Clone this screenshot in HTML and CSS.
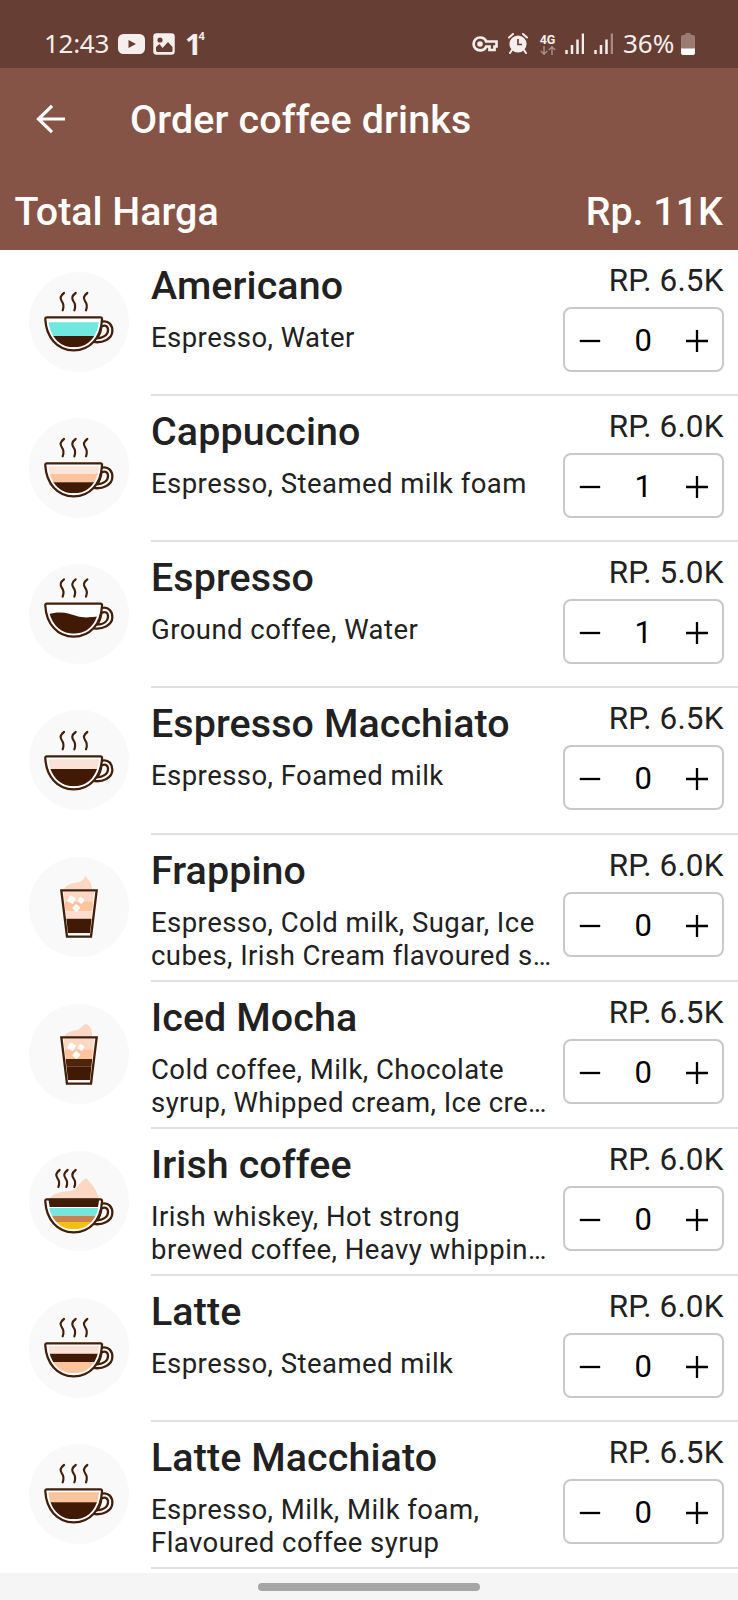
FILE: index.html
```html
<!DOCTYPE html>
<html lang="en">
<head>
<meta charset="utf-8">
<title>Order coffee drinks</title>
<link rel="stylesheet" href="styles.css">
</head>
<body>
<svg class="defs" width="0" height="0">
  <defs>
    <clipPath id="bowl"><path d="M58 143H210C207 190 180 226 134 226C90 226 61 190 58 143Z"/></clipPath>
    <clipPath id="tumbler"><path d="M103 103H196L183 229H117Z"/></clipPath>
    <symbol id="steam" viewBox="0 0 300 300"><g fill="none" stroke="#40200c" stroke-width="6.500" stroke-linecap="round"><path d="M105 63C91 73 94 82 99 89C105 97 104 107 101 115"/><path d="M140 63C126 73 129 82 134 89C140 97 139 107 136 115"/><path d="M175 63C161 73 164 82 169 89C175 97 174 107 171 115"/></g></symbol>
    <symbol id="cup" viewBox="0 0 300 300"><g fill="none" stroke="#40200c" stroke-width="6.800" stroke-linejoin="round"><path d="M54 136H214Q220 136 219 143C216 197 184 235 134 235C84 235 52 195 49 143Q48 136 54 136Z"/><path d="M219 149C239 144 251 160 250 178C249 200 222 214 194 210"/><path d="M217 164C230 157 238 164 237 176C236 190 221 198 204 199C212 189 216 178 217 164Z"/></g></symbol>
    <symbol id="glass" viewBox="0 0 300 300"><path d="M97 100H203L186 239H114Z" fill="none" stroke="#40200c" stroke-width="7"/></symbol>
    <symbol id="ice" viewBox="0 0 300 300"><g fill="#fff"><rect x="118" y="118" width="20" height="20" rx="3" transform="rotate(30 128 128)"/><rect x="148" y="122" width="16" height="16" rx="3" transform="rotate(35 156 130)"/><rect x="133" y="144" width="18" height="18" rx="3" transform="rotate(42 142 153)"/></g></symbol>
    <symbol id="minus" viewBox="0 0 24 24"><path d="M1.800 12H22.200" stroke="#000" stroke-width="2.300"/></symbol>
    <symbol id="plus" viewBox="0 0 24 24"><path d="M1 12H23M12 1V23" stroke="#000" stroke-width="2.300"/></symbol>
  </defs>
</svg>

<header class="status">
  <div class="status-left">
    <span class="clock">12:43</span>
    <svg class="i-video" viewBox="0 0 27 20"><rect width="27" height="20" rx="5.500" fill="#f5eeec"/><path d="M10.500 6L18 10L10.500 14Z" fill="#663e34"/></svg>
    <svg class="i-photo" viewBox="0 0 22 22"><rect x="1" y="1" width="20" height="20" rx="2.500" fill="#f5eeec" stroke="#f5eeec" stroke-width="1.500"/><circle cx="7" cy="7" r="2.600" fill="#663e34"/><path d="M3 17V14L6.500 11L9.500 15L15 9L19.500 14V18Q19.500 19 18.500 19H4.500Q3 19 3 17Z" fill="#663e34"/></svg>
    <span class="one">1<sup class="four">4</sup></span>
  </div>
  <div class="status-right">
    <svg class="i-key" viewBox="0 0 26 16"><path d="M8 1.500C12 1.500 13.500 3.500 14.200 5.500H24.500V10.500H22.500V14H17.500V10.500H14.200C13.500 12.500 11.500 14.300 8 14.300A6.400 6.400 0 0 1 8 1.500Z" fill="none" stroke="#f5eeec" stroke-width="2.700"/><circle cx="8" cy="8" r="2.800" fill="#f5eeec"/></svg>
    <svg class="i-alarm" viewBox="0 0 20 21"><path d="M1 4.500L5 1M19 4.500L15 1M4 17L2 20M16 17L18 20" stroke="#f5eeec" stroke-width="2" stroke-linecap="round"/><circle cx="10" cy="11" r="8.600" fill="#f5eeec"/><path d="M10 6V11.500H14" fill="none" stroke="#663e34" stroke-width="1.700"/></svg>
    <span class="net"><b class="net-label">4G</b><svg class="i-arrows" viewBox="0 0 16 9"><path d="M4 0V8M.8 5L4 8.200L7.200 5M12 9V1M8.800 4L12 .8L15.200 4" fill="none" stroke="#a58c86" stroke-width="1.500"/></svg></span>
    <svg class="i-signal" viewBox="0 0 19 21"><path d="M1.500 17V21M7 12V21M12.500 6.500V21M18 .5V21" stroke="#f5eeec" stroke-width="2.500"/></svg>
    <svg class="i-signal second" viewBox="0 0 19 21"><path d="M1.500 17V21M7 12V21M12.500 6.500V21" stroke="#f5eeec" stroke-width="2.500"/><path d="M18 .5V21" stroke="#a58c86" stroke-width="2.500"/></svg>
    <span class="percent">36%</span>
    <svg class="i-battery" viewBox="0 0 14 22"><path d="M4 2Q4 0 5.500 0H8.500Q10 0 10 2H12Q14 2 14 4V16H0V4Q0 2 2 2Z" fill="#9a7c75"/><path d="M0 15.500H14V20Q14 22 12 22H2Q0 22 0 20Z" fill="#fff"/></svg>
  </div>
</header>

<section class="appbar">
  <div class="toolbar">
    <svg class="back" viewBox="0 0 30 30"><path d="M29 15H3M16 1.800L2.500 15L16 28.200" fill="none" stroke="#fff" stroke-width="3.200"/></svg>
    <h1 class="title">Order coffee drinks</h1>
  </div>
  <div class="total"><span>Total Harga</span><span>Rp. 11K</span></div>
</section>

<main class="list">
  <article class="row">
    <svg class="pic" viewBox="0 0 300 300"><circle cx="150" cy="150" r="150" fill="#f9f9f9"/><use href="#steam"/><path d="M50 137H218C214 195 184 233 134 233C84 233 54 195 50 137Z" fill="#fff"/><g clip-path="url(#bowl)"><path d="M50 151H220V192H50Z" fill="#70e8e0"/><path d="M50 192H220V230H50Z" fill="#401a04"/></g><use href="#cup"/></svg>
    <div class="body"><div class="info"><h2 class="name">Americano</h2><p class="desc">Espresso, Water</p></div>
    <div class="side"><span class="price">RP. 6.5K</span><div class="stepper"><svg class="op"><use href="#minus"/></svg><span class="qty">0</span><svg class="op"><use href="#plus"/></svg></div></div></div>
  </article>
  <article class="row">
    <svg class="pic" viewBox="0 0 300 300"><circle cx="150" cy="150" r="150" fill="#f9f9f9"/><use href="#steam"/><path d="M50 137H218C214 195 184 233 134 233C84 233 54 195 50 137Z" fill="#fff"/><g clip-path="url(#bowl)"><path d="M50 145H220V168H50Z" fill="#fce6da"/><path d="M50 168H220V193H50Z" fill="#fcc49c"/><path d="M50 193H220V230H50Z" fill="#401a04"/></g><use href="#cup"/></svg>
    <div class="body"><div class="info"><h2 class="name">Cappuccino</h2><p class="desc">Espresso, Steamed milk foam</p></div>
    <div class="side"><span class="price">RP. 6.0K</span><div class="stepper"><svg class="op"><use href="#minus"/></svg><span class="qty">1</span><svg class="op"><use href="#plus"/></svg></div></div></div>
  </article>
  <article class="row">
    <svg class="pic" viewBox="0 0 300 300"><circle cx="150" cy="150" r="150" fill="#f9f9f9"/><g transform="translate(0 -17)"><use href="#steam" width="300" height="300"/><path d="M50 137H218C214 195 184 233 134 233C84 233 54 195 50 137Z" fill="#fff"/><g clip-path="url(#bowl)"><path d="M50 171C90 155 120 165 145 174C165 180 190 176 220 174V230H50Z" fill="#401a04"/></g><use href="#cup" width="300" height="300"/></g></svg>
    <div class="body"><div class="info"><h2 class="name">Espresso</h2><p class="desc">Ground coffee, Water</p></div>
    <div class="side"><span class="price">RP. 5.0K</span><div class="stepper"><svg class="op"><use href="#minus"/></svg><span class="qty">1</span><svg class="op"><use href="#plus"/></svg></div></div></div>
  </article>
  <article class="row tall">
    <svg class="pic" viewBox="0 0 300 300"><circle cx="150" cy="150" r="150" fill="#f9f9f9"/><g transform="translate(0 3)"><use href="#steam" width="300" height="300"/><path d="M50 137H218C214 195 184 233 134 233C84 233 54 195 50 137Z" fill="#fff"/><g clip-path="url(#bowl)"><path d="M50 145H220V175H50Z" fill="#fce2d6"/><path d="M50 174H220V230H50Z" fill="#401a04"/></g><use href="#cup" width="300" height="300"/></g></svg>
    <div class="body"><div class="info"><h2 class="name">Espresso Macchiato</h2><p class="desc">Espresso, Foamed milk</p></div>
    <div class="side"><span class="price">RP. 6.5K</span><div class="stepper"><svg class="op"><use href="#minus"/></svg><span class="qty">0</span><svg class="op"><use href="#plus"/></svg></div></div></div>
  </article>
  <article class="row tall">
    <svg class="pic" viewBox="0 0 300 300"><circle cx="150" cy="150" r="150" fill="#f9f9f9"/><path d="M104 98C112 82 126 80 140 77C154 75 165 70 169 56C175 68 190 72 189 98Z" fill="#fcd8c4"/><path d="M98 102H201L184 236H116Z" fill="#fff"/><g clip-path="url(#tumbler)"><path d="M95 103H205V133H95Z" fill="#fcd8c4"/><path d="M95 133H205V163H95Z" fill="#fcc49c"/><path d="M95 163H205V185H95Z" fill="#fcdccc"/><path d="M95 185H205V230H95Z" fill="#401a04"/></g><use href="#ice"/><use href="#glass"/></svg>
    <div class="body"><div class="info"><h2 class="name">Frappino</h2><p class="desc">Espresso, Cold milk, Sugar, Ice<br>cubes, Irish Cream flavoured s…</p></div>
    <div class="side"><span class="price">RP. 6.0K</span><div class="stepper"><svg class="op"><use href="#minus"/></svg><span class="qty">0</span><svg class="op"><use href="#plus"/></svg></div></div></div>
  </article>
  <article class="row tall">
    <svg class="pic" viewBox="0 0 300 300"><circle cx="150" cy="150" r="150" fill="#f9f9f9"/><path d="M104 100C112 84 126 82 140 79C154 77 160 62 171 60C184 66 191 74 189 100Z" fill="#fcd8c4"/><path d="M98 102H201L184 236H116Z" fill="#fff"/><g clip-path="url(#tumbler)"><path d="M95 103H205V136H95Z" fill="#fcd8c4"/><path d="M95 136H205V165H95Z" fill="#fcc49c"/><path d="M95 165H205V188H95Z" fill="#502408"/><path d="M95 188H205V230H95Z" fill="#401a04"/></g><use href="#ice"/><use href="#glass"/></svg>
    <div class="body"><div class="info"><h2 class="name">Iced Mocha</h2><p class="desc">Cold coffee, Milk, Chocolate<br>syrup, Whipped cream, Ice cre…</p></div>
    <div class="side"><span class="price">RP. 6.5K</span><div class="stepper"><svg class="op"><use href="#minus"/></svg><span class="qty">0</span><svg class="op"><use href="#plus"/></svg></div></div></div>
  </article>
  <article class="row tall">
    <svg class="pic" viewBox="0 0 300 300"><circle cx="150" cy="150" r="150" fill="#f9f9f9"/><path d="M62 142C75 124 100 122 125 120C148 116 152 88 173 82C180 94 202 106 208 142Z" fill="#fcd8c4"/><g fill="none" stroke="#40200c" stroke-width="6.500" stroke-linecap="round"><path d="M92 57C78 67 81 76 86 83C92 91 91 101 88 108"/><path d="M116 57C102 67 105 76 110 83C116 91 115 101 112 108"/><path d="M140 57C126 67 129 76 134 83C140 91 139 101 136 108"/></g><g transform="translate(0 9)"><path d="M50 137H218C214 195 184 233 134 233C84 233 54 195 50 137Z" fill="#fff"/><path d="M58 134H211L207 159H62Z" fill="#401a04"/><g clip-path="url(#bowl)"><path d="M50 162H220V185H50Z" fill="#70e8e0"/><path d="M50 185H220V204H50Z" fill="#cc8050"/><path d="M50 204H220V230H50Z" fill="#f4c010"/></g><use href="#cup" width="300" height="300"/></g></svg>
    <div class="body"><div class="info"><h2 class="name">Irish coffee</h2><p class="desc">Irish whiskey, Hot strong<br>brewed coffee, Heavy whippin…</p></div>
    <div class="side"><span class="price">RP. 6.0K</span><div class="stepper"><svg class="op"><use href="#minus"/></svg><span class="qty">0</span><svg class="op"><use href="#plus"/></svg></div></div></div>
  </article>
  <article class="row">
    <svg class="pic" viewBox="0 0 300 300"><circle cx="150" cy="150" r="150" fill="#f9f9f9"/><use href="#steam"/><path d="M50 137H218C214 195 184 233 134 233C84 233 54 195 50 137Z" fill="#fff"/><g clip-path="url(#bowl)"><path d="M50 143H220V167H50Z" fill="#fce2d6"/><path d="M50 167H220V192H50Z" fill="#401a04"/><path d="M50 192H220V230H50Z" fill="#fcc49c"/></g><use href="#cup"/></svg>
    <div class="body"><div class="info"><h2 class="name">Latte</h2><p class="desc">Espresso, Steamed milk</p></div>
    <div class="side"><span class="price">RP. 6.0K</span><div class="stepper"><svg class="op"><use href="#minus"/></svg><span class="qty">0</span><svg class="op"><use href="#plus"/></svg></div></div></div>
  </article>
  <article class="row tall">
    <svg class="pic" viewBox="0 0 300 300"><circle cx="150" cy="150" r="150" fill="#f9f9f9"/><use href="#steam"/><path d="M50 137H218C214 195 184 233 134 233C84 233 54 195 50 137Z" fill="#fff"/><g clip-path="url(#bowl)"><path d="M50 145H220V175H50Z" fill="#fcc49c"/><path d="M50 175H220V230H50Z" fill="#401a04"/></g><use href="#cup"/></svg>
    <div class="body"><div class="info"><h2 class="name">Latte Macchiato</h2><p class="desc">Espresso, Milk, Milk foam,<br>Flavoured coffee syrup</p></div>
    <div class="side"><span class="price">RP. 6.5K</span><div class="stepper"><svg class="op"><use href="#minus"/></svg><span class="qty">0</span><svg class="op"><use href="#plus"/></svg></div></div></div>
  </article>
</main>
<footer class="navbar"><div class="pill"></div></footer>
</body>
</html>
```

FILE: styles.css
```css
* { box-sizing: border-box; }
body {
  margin: 0;
  width: 738px;
  height: 1600px;
  overflow: hidden;
  display: flex;
  flex-direction: column;
  background: #fff;
  color: #212121;
  font-family: Roboto, "Noto Sans", sans-serif;
}
h1, h2, p { margin: 0; font-weight: 500; }
svg { display: block; flex: none; }
.defs { position: absolute; }

.status {
  height: 68px;
  padding: 20px 43px 0 44px;
  display: flex;
  justify-content: space-between;
  background: #663e34;
  color: #f5eeec;
  font-family: "Noto Sans", sans-serif;
}
.status-left, .status-right { display: flex; align-items: center; height: 47px; }
.clock { font-size: 26px; line-height: 47px; width: 74px; letter-spacing: -.3px; }
.i-video { width: 27px; height: 20px; }
.i-photo { width: 22px; height: 22px; margin-left: 8px; }
.one { font-size: 29px; font-weight: 700; line-height: 47px; margin-left: 10px; display: flex; }
.four { font-size: 11px; line-height: 32px; margin-left: -3px; }
.i-key { width: 26px; height: 16px; }
.i-alarm { width: 20px; height: 21px; margin-left: 10px; }
.net { display: flex; flex-direction: column; align-items: center; margin-left: 11px; width: 17px; }
.net-label { font: 700 12.5px/13px Roboto, sans-serif; }
.i-arrows { width: 16px; height: 9px; }
.i-signal { width: 19px; height: 21px; margin-left: 9px; }
.second { margin-left: 10px; }
.percent { font-size: 26px; line-height: 47px; margin-left: 10px; width: 57px; }
.i-battery { width: 14px; height: 22px; margin-left: 1px; }

.appbar { height: 182px; background: #855446; color: #fff; }
.toolbar { height: 102px; display: flex; align-items: center; padding-left: 36px; }
.back { width: 30px; height: 30px; margin-top: -1px; }
.title { font-size: 39.4px; line-height: 48px; margin: 2px 0 0 64px; letter-spacing: .13px; }
.total {
  display: flex;
  justify-content: space-between;
  padding: 18px 15px 0 14.5px;
  font-size: 39.4px;
  line-height: 48px;
  font-weight: 500;
}

.list { height: 1323px; overflow: hidden; }
.row { height: 146px; display: flex; }
.row.tall { height: 147px; }
.pic { width: 100px; height: 100px; margin: 22px 22px 0 29px; }
.body {
  flex: 1;
  min-width: 0;
  display: flex;
  justify-content: space-between;
  padding-right: 14.5px;
  border-bottom: 2px solid #e0e0e0;
}
.info { padding-top: 13px; white-space: nowrap; }
.name { font-size: 39.4px; line-height: 46px; letter-spacing: .1px; }
.desc { font-size: 27.5px; line-height: 32.5px; margin-top: 13px; font-weight: 400; letter-spacing: .45px; }
.side { display: flex; flex-direction: column; align-items: flex-end; padding-top: 12px; }
.price { font-size: 31.5px; line-height: 37px; letter-spacing: .1px; }
.stepper {
  width: 161px;
  height: 65px;
  margin-top: 8px;
  padding: 3px 12.5px 0 13px;
  display: flex;
  align-items: center;
  justify-content: space-between;
  border: 2px solid #c9c9c9;
  border-radius: 8px;
}
.op { width: 24px; height: 24px; }
.qty { font-size: 31px; line-height: 36px; color: #000; }

.navbar { flex: 1; background: #f5f5f5; display: flex; justify-content: center; padding-top: 9.500px; }
.pill { width: 222px; height: 8px; border-radius: 4px; background: #a6a6a6; }
```
